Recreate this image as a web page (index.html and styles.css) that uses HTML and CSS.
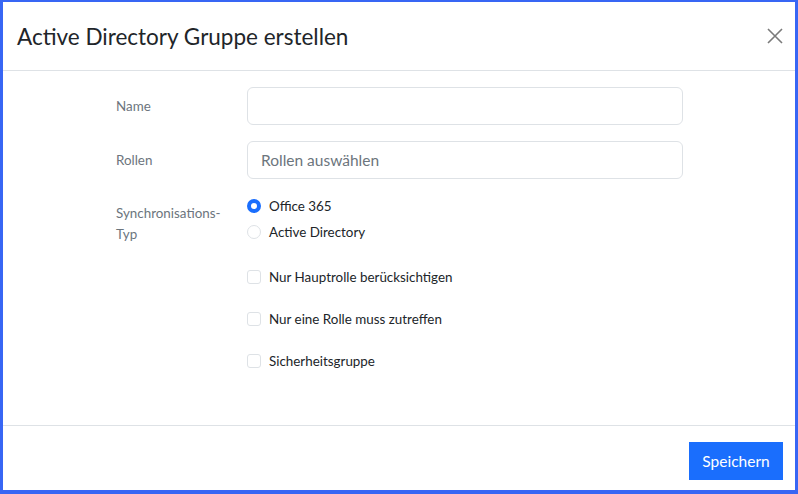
FILE: index.html
```html
<!DOCTYPE html>
<html lang="de">
<head>
    <meta charset="UTF-8">
    <meta name="viewport" content="width=device-width, initial-scale=1.0">
    <title>Active Directory Gruppe erstellen</title>
    <link rel="stylesheet" href="styles.css">
</head>
<body>
    <!-- Dialog for creating a new AD group -->
    <div class="modal">
        <div class="modal-header">
            <h1 class="modal-title">Active Directory Gruppe erstellen</h1>
            <button type="button" class="close-btn" aria-label="Schließen">
                <svg width="16" height="16" viewBox="0 0 16 16">
                    <path d="M1 1L15 15M15 1L1 15" stroke="#7a7a7a" stroke-width="1.6" fill="none"/>
                </svg>
            </button>
        </div>

        <div class="modal-body">
            <form class="form">
                <div class="form-row">
                    <label class="form-label" for="name">Name</label>
                    <input type="text" id="name" class="form-input">
                </div>
                <div class="form-row">
                    <label class="form-label" for="roles">Rollen</label>
                    <input type="text" id="roles" class="form-input" placeholder="Rollen auswählen">
                </div>
                <div class="form-row sync-row">
                    <label class="form-label sync-label">Synchronisations-<br>Typ</label>
                    <div class="radio-group">
                        <label class="option radio-option">
                            <input type="radio" name="syncType" value="o365" checked>
                            <span>Office 365</span>
                        </label>
                        <label class="option radio-option">
                            <input type="radio" name="syncType" value="ad">
                            <span>Active Directory</span>
                        </label>
                    </div>
                </div>
                <!-- Checkboxes sit in the control column only -->
                <div class="form-row check-row">
                    <div></div>
                    <label class="option">
                        <input type="checkbox" id="mainRoleOnly">
                        <span>Nur Hauptrolle berücksichtigen</span>
                    </label>
                </div>
                <div class="form-row check-row">
                    <div></div>
                    <label class="option">
                        <input type="checkbox" id="oneRoleOnly">
                        <span>Nur eine Rolle muss zutreffen</span>
                    </label>
                </div>
                <div class="form-row check-row">
                    <div></div>
                    <label class="option">
                        <input type="checkbox" id="securityGroup">
                        <span>Sicherheitsgruppe</span>
                    </label>
                </div>
            </form>
        </div>

        <div class="modal-footer">
            <button type="button" class="save-btn">Speichern</button>
        </div>
    </div>
</body>
</html>
```

FILE: styles.css
```css
/* Page background shows as a frame around the dialog */
html, body {
    height: 100%;
}
body {
    margin: 0;
    padding: 2px 3px 4px 3px;
    box-sizing: border-box;
    background-color: #3866f4;
    font-family: Lato, "Open Sans", Arial, sans-serif;
    color: #212529;
}
.modal {
    background-color: #fff;
    height: 100%;
    display: flex;
    flex-direction: column;
}
/* Header with title and close button */
.modal-header {
    height: 68px;
    border-bottom: 1px solid #dee2e6;
    display: flex;
    align-items: center;
    justify-content: space-between;
    padding: 0 12px 0 14px;
    flex-shrink: 0;
}
.modal-title {
    margin: 0;
    font-size: 22.5px;
    font-weight: 400;
    color: #212529;
}
.close-btn {
    background: none;
    border: none;
    padding: 0;
    width: 16px;
    height: 16px;
    cursor: pointer;
}
/* Form area */
.modal-body {
    flex: 1;
    padding-top: 16px;
}
.form {
    width: 568px;
    margin: 0 auto;
}
.form-row {
    display: grid;
    grid-template-columns: 132px 1fr;
    margin-bottom: 16px;
}
.form-label {
    font-size: 13.4px;
    color: #6c757d;
    line-height: 21px;
    padding-top: 9px;
    padding-left: 1px;
}
.form-input {
    height: 38px;
    box-sizing: border-box;
    border: 1px solid #dee2e6;
    border-radius: 6px;
    padding: 0 13px;
    font-family: inherit;
    font-size: 15.5px;
    color: #212529;
}
.form-input::placeholder {
    color: #6c757d;
}
.sync-row {
    margin-top: -2px;
    margin-bottom: 19px;
}
.sync-label {
    padding-top: 10px;
}
/* Radio buttons and checkboxes */
.option {
    display: flex;
    align-items: center;
    height: 26px;
    font-size: 13.4px;
    color: #212529;
}
.option input {
    appearance: none;
    margin: 0 8px 0 0;
    width: 14px;
    height: 14px;
    border: 1px solid #dee2e6;
    background-color: #fff;
    flex-shrink: 0;
}
.option input[type="radio"] {
    border-radius: 50%;
}
.option input[type="radio"]:checked {
    border: 4px solid #1a6efd;
}
.option input[type="checkbox"] {
    border-radius: 3px;
}
.check-row {
    height: 26px;
}
/* Footer with the save action */
.modal-footer {
    border-top: 1px solid #dee2e6;
    height: 65px;
    padding: 16px 12px 0 0;
    box-sizing: border-box;
    display: flex;
    justify-content: flex-end;
    align-items: flex-start;
    flex-shrink: 0;
}
.save-btn {
    height: 38px;
    width: 94px;
    background-color: #1a6efd;
    color: #fff;
    border: none;
    border-radius: 0;
    font-family: inherit;
    font-size: 15.5px;
    cursor: pointer;
}
```
